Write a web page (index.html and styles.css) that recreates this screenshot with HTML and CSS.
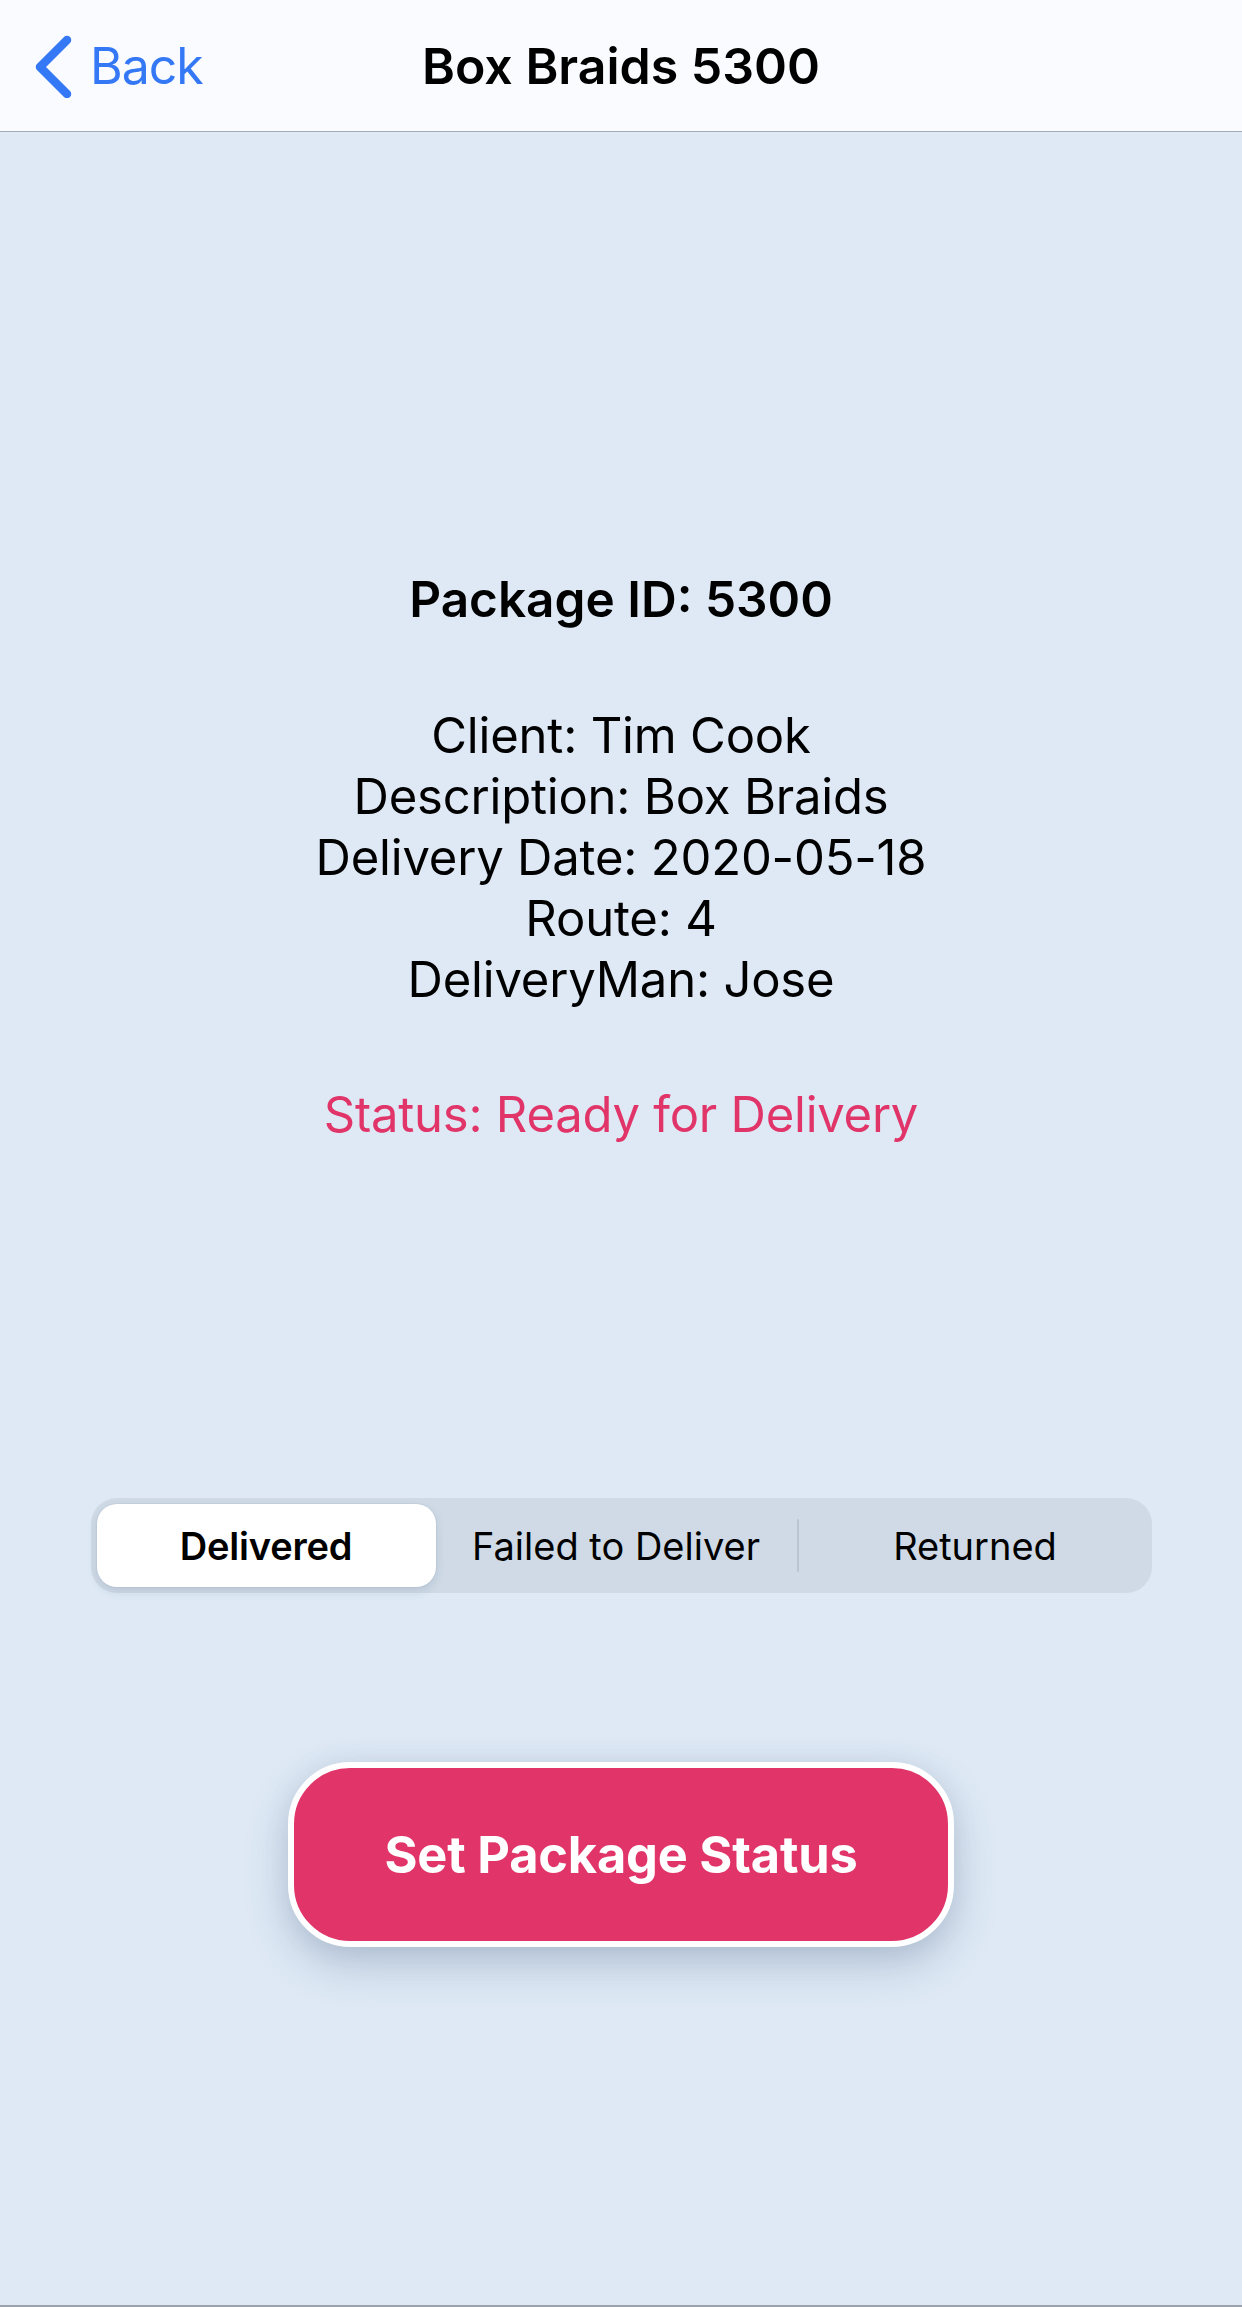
FILE: index.html
```html
<!DOCTYPE html>
<html lang="en">
<head>
<meta charset="utf-8">
<title>Box Braids 5300</title>
<link rel="stylesheet" href="styles.css">
</head>
<body>
<div class="screen">
  <header class="nav">
    <a class="back" href="#">
      <svg class="chev" width="40" height="64" viewBox="0 0 40 64" aria-hidden="true">
        <path d="M33 6 L6 33 L33 60" fill="none" stroke="#3478f6" stroke-width="8.5" stroke-linecap="round" stroke-linejoin="round"/>
      </svg>
      <span>Back</span>
    </a>
    <div class="title">Box Braids 5300</div>
    <div class="nav-spacer"></div>
  </header>

  <main class="content">
    <h1 class="pkg">Package ID: 5300</h1>
    <div class="info">
      <div>Client: Tim Cook</div>
      <div>Description: Box Braids</div>
      <div>Delivery Date: 2020-05-18</div>
      <div>Route: 4</div>
      <div>DeliveryMan: Jose</div>
    </div>
    <div class="status">Status: Ready for Delivery</div>

    <div class="seg">
      <div class="seg-item selected">Delivered</div>
      <div class="seg-item">Failed to Deliver</div>
      <div class="seg-item divided">Returned</div>
    </div>

    <button class="action" type="button">Set Package Status</button>
  </main>
</div>
</body>
</html>
```

FILE: styles.css
```css
* { box-sizing: border-box; }

html, body {
  margin: 0;
  padding: 0;
}

body {
  background: #dee9f5;
  font-family: Inter, "Noto Sans", "Liberation Sans", sans-serif;
  color: #000;
}

.screen {
  height: 2307px;
  display: flex;
  flex-direction: column;
  border-bottom: 2px solid #9aa3ae;
}

.nav {
  height: 132px;
  background: #f9fbfe;
  border-bottom: 1.5px solid #a3abb6;
  display: grid;
  grid-template-columns: 1fr auto 1fr;
  align-items: center;
}

.back {
  display: flex;
  align-items: center;
  gap: 16px;
  padding-left: 34px;
  color: #3478f6;
  text-decoration: none;
  font-size: 50px;
  font-weight: 400;
  letter-spacing: -1px;
}

.chev { display: block; }

.title {
  font-size: 50px;
  font-weight: 600;
  letter-spacing: 0;
}

.content {
  flex: 1;
  display: flex;
  flex-direction: column;
  align-items: center;
  text-align: center;
  padding-top: 437px;
}

.pkg {
  margin: 0;
  font-size: 49.5px;
  line-height: 61px;
  font-weight: 600;
  letter-spacing: 0;
}

.info {
  margin-top: 75px;
  font-size: 49px;
  line-height: 61px;
  font-weight: 400;
  letter-spacing: -0.2px;
}

.status {
  margin-top: 74px;
  font-size: 49px;
  line-height: 61px;
  color: #e1356a;
  letter-spacing: -0.25px;
}

.seg {
  margin-top: 353px;
  width: 1061px;
  height: 95px;
  padding: 6px;
  background: #cfdae6;
  border-radius: 26px;
  display: grid;
  grid-template-columns: 339px 361px 1fr;
  align-items: stretch;
}

.seg-item {
  display: flex;
  align-items: center;
  justify-content: center;
  font-size: 38px;
  font-weight: 400;
  letter-spacing: 0;
  position: relative;
}

.seg-item.divided {
  padding-left: 8px;
}

.seg-item.selected {
  background: #fff;
  border-radius: 20px;
  font-weight: 600;
  letter-spacing: -0.2px;
  box-shadow: 0 4px 10px rgba(60, 80, 110, 0.14), 0 0 0 1px rgba(60, 80, 110, 0.05);
}

.seg-item.divided::before {
  content: "";
  position: absolute;
  left: 0;
  top: 15px;
  bottom: 15px;
  width: 2px;
  background: #b9c5d2;
  border-radius: 1px;
}

.action {
  margin-top: 169px;
  width: 666px;
  height: 185px;
  border: 6px solid #fff;
  border-radius: 62px;
  background: #e1356a;
  color: #fff;
  font-family: Inter, "Noto Sans", "Liberation Sans", sans-serif;
  font-size: 50.5px;
  font-weight: 700;
  letter-spacing: -0.2px;
  box-shadow: 0 18px 42px rgba(70, 95, 130, 0.28), 0 0 24px rgba(120, 140, 170, 0.12);
  cursor: pointer;
}
```
